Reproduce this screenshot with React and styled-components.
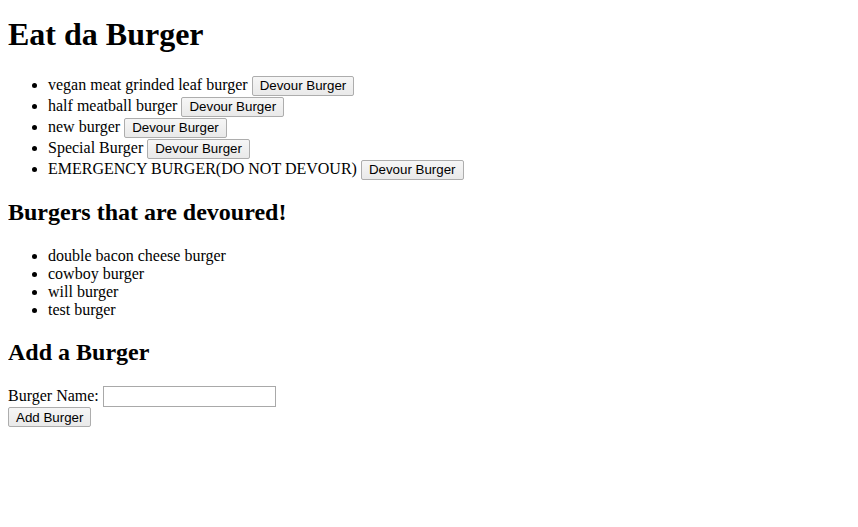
import React from "react";
import styled, { createGlobalStyle } from "styled-components";

const GlobalStyle = createGlobalStyle`
  body {
    margin: 8px;
    font-family: "Liberation Serif", "Times New Roman", serif;
    font-size: 16px;
    color: #000;
    background: #fff;
  }
`;

const Title = styled.h1`
  font-size: 32px;
  font-weight: bold;
  margin: 8px 0 21px;
`;

const SubTitle = styled.h2`
  font-size: 24px;
  font-weight: bold;
  margin: 20px 0;
`;

const BurgerList = styled.ul`
  margin: ${(props) => props.$top || 16}px 0 ${(props) => props.$bottom || 16}px;
  padding-left: 40px;
  list-style: disc;
`;

const BurgerItem = styled.li`
  height: ${(props) => (props.$withButton ? "21px" : "18px")};
  line-height: ${(props) => (props.$withButton ? "21px" : "18px")};
`;

const Button = styled.button`
  font-family: "Liberation Sans", Arial, sans-serif;
  font-size: 13.33px;
  color: #000;
  background: linear-gradient(#f6f6f6, #e9e9e9);
  border: 1px solid #adadad;
  border-radius: 2px;
  padding: 1px 7px;
  height: 20px;
  margin-left: ${(props) => (props.$block ? 0 : 4)}px;
  vertical-align: baseline;
  cursor: pointer;
`;

const Form = styled.form`
  margin: 0;
`;

const Label = styled.label`
  font-size: 16px;
`;

const TextInput = styled.input`
  width: 173px;
  height: 21px;
  box-sizing: border-box;
  border: 1px solid #a9a9a9;
  padding: 1px 2px;
  margin-left: 4px;
  font-family: "Liberation Sans", Arial, sans-serif;
  font-size: 13.33px;
`;

const burgers = [
  "vegan meat grinded leaf burger",
  "half meatball burger",
  "new burger",
  "Special Burger",
  "EMERGENCY BURGER(DO NOT DEVOUR)",
];

const devoured = ["double bacon cheese burger", "cowboy burger", "will burger", "test burger"];

export default function App() {
  return (
    <>
      <GlobalStyle />
      <Title>Eat da Burger</Title>
      <BurgerList $bottom={17}>
        {burgers.map((b) => (
          <BurgerItem key={b} $withButton>
            {b}
            <Button type="button">Devour Burger</Button>
          </BurgerItem>
        ))}
      </BurgerList>
      <SubTitle>Burgers that are devoured!</SubTitle>
      <BurgerList $top={21} $bottom={15}>
        {devoured.map((b) => (
          <BurgerItem key={b}>{b}</BurgerItem>
        ))}
      </BurgerList>
      <SubTitle>Add a Burger</SubTitle>
      <Form onSubmit={(e) => e.preventDefault()}>
        <Label>
          Burger Name:
          <TextInput type="text" />
        </Label>
        <br />
        <Button type="submit" $block>
          Add Burger
        </Button>
      </Form>
    </>
  );
}
